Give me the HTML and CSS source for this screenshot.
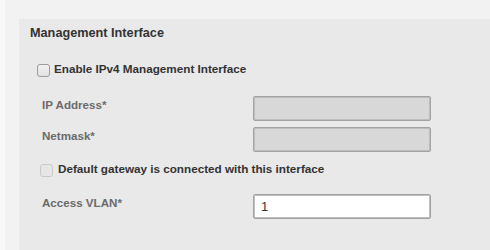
FILE: index.html
```html
<!DOCTYPE html>
<html>
<head>
<meta charset="utf-8">
<link rel="stylesheet" href="styles.css">
</head>
<body>
<div class="page">
  <div class="strip"></div>
  <div class="main">
    <section class="panel">
      <h2 class="title">Management Interface</h2>
      <label class="check-row enable">
        <input type="checkbox" class="cb">
        <span class="check-text">Enable IPv4 Management Interface</span>
      </label>
      <div class="field ip">
        <span class="field-label">IP Address*</span>
        <input type="text" class="text-input" disabled>
      </div>
      <div class="field netmask">
        <span class="field-label">Netmask*</span>
        <input type="text" class="text-input" disabled>
      </div>
      <label class="check-row gateway">
        <input type="checkbox" class="cb" disabled>
        <span class="check-text">Default gateway is connected with this interface</span>
      </label>
      <div class="field vlan">
        <span class="field-label">Access VLAN*</span>
        <input type="text" class="text-input" value="1">
      </div>
    </section>
  </div>
</div>
</body>
</html>
```

FILE: styles.css
```css
html, body {
  margin: 0;
  padding: 0;
  height: 100%;
}
body {
  background: #f2f2f2;
  font-family: "Liberation Sans", Arial, sans-serif;
  color: #363636;
}
.page {
  display: flex;
  height: 250px;
  overflow: hidden;
}
.strip {
  width: 5px;
  background: #f8f8f8;
}
.main {
  flex: 1;
  display: flex;
  flex-direction: column;
  padding: 19px 0 0 14px;
}
.panel {
  flex: 1;
  background: #e9e9e9;
  padding: 7px 0 0 11px;
}
.title {
  margin: 0;
  font-size: 12.7px;
  line-height: 15px;
  font-weight: bold;
  color: #333;
}
.check-row {
  display: flex;
  align-items: flex-start;
}
.enable {
  margin: 21px 0 0 7px;
  gap: 4px;
}
.gateway {
  margin: 10px 0 0 10px;
  gap: 5px;
}
.cb {
  appearance: none;
  -webkit-appearance: none;
  margin: 2px 0 0 0;
  width: 13px;
  height: 13px;
  box-sizing: border-box;
  border: 1px solid #9c9c9c;
  border-radius: 3px;
  background: linear-gradient(#f0f0f0, #e2e2e2);
}
.cb:disabled {
  border-color: #c9c9c9;
  background: #e6e6e6;
}
.check-text {
  font-size: 11.7px;
  line-height: 14px;
  font-weight: bold;
  color: #333;
}
.field {
  display: flex;
  align-items: flex-start;
  margin-left: 12px;
}
.ip { margin-top: 19px; }
.netmask { margin-top: 6px; }
.vlan { margin-top: 17px; }
.field-label {
  width: 211px;
  padding-top: 2px;
  font-size: 11.6px;
  line-height: 14px;
  font-weight: bold;
  color: #6b6b6b;
}
.text-input {
  box-sizing: border-box;
  width: 178px;
  height: 25px;
  margin: 0;
  border: 1px solid #a3a3a3;
  box-shadow: inset 0 0 0 1px #bdbdbd;
  border-radius: 2px;
  background: #fff;
  padding: 0 7px;
  font-family: "Liberation Sans", Arial, sans-serif;
  font-size: 13px;
  color: #333;
  outline: none;
}
.text-input:disabled {
  background: #d8d8d8;
}
```
